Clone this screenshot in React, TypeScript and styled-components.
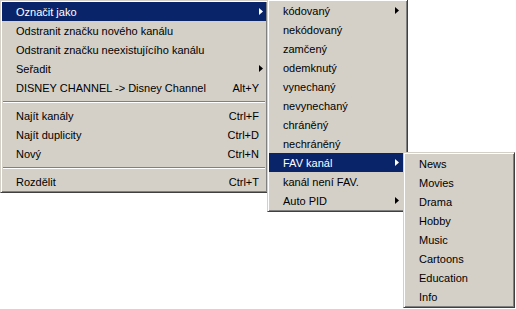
import React from "react";
import styled, { createGlobalStyle } from "styled-components";

const GlobalStyle = createGlobalStyle`
  html, body {
    margin: 0;
    padding: 0;
    background: #ffffff;
  }
  body {
    font-family: Tahoma, "Liberation Sans", Arial, sans-serif;
    font-size: 11px;
  }
`;

const Screen = styled.div`
  position: relative;
  width: 516px;
  height: 309px;
  overflow: hidden;
  background: #ffffff;
`;

const Menu = styled.div<{ $width: number; $left?: number; $top?: number }>`
  position: ${(p) => (p.$left === undefined ? "relative" : "absolute")};
  left: ${(p) => p.$left ?? 0}px;
  top: ${(p) => p.$top ?? 0}px;
  width: ${(p) => p.$width}px;
  box-sizing: border-box;
  padding: 1px;
  background: #d4d0c8;
  border: 1px solid;
  border-color: #d4d0c8 #404040 #404040 #d4d0c8;
  box-shadow: inset 1px 1px #ffffff, inset -1px -1px #808080;
  display: flex;
  flex-direction: column;
`;

const Item = styled.div<{ $active?: boolean }>`
  display: flex;
  align-items: center;
  height: 19px;
  padding-left: 14px;
  background: ${(p) => (p.$active ? "#0a246a" : "transparent")};
  color: ${(p) => (p.$active ? "#ffffff" : "#000000")};
  white-space: nowrap;
`;

const Label = styled.span`
  flex: 1;
`;

const Shortcut = styled.span`
  margin-right: 7px;
`;

const ArrowBox = styled.span<{ $gap: number }>`
  display: flex;
  margin-right: ${(p) => p.$gap}px;
`;

const Separator = styled.div`
  height: 9px;
  display: flex;
  flex-direction: column;
  justify-content: center;
  padding: 0 1px;

  &::before {
    content: "";
    display: block;
    border-top: 1px solid #808080;
    border-bottom: 1px solid #ffffff;
  }
`;

type Entry =
  | { label: string; shortcut?: string; sub?: boolean; active?: boolean }
  | "sep";

const Arrow: React.FC<{ active?: boolean; gap: number }> = ({ active, gap }) => (
  <ArrowBox $gap={gap}>
    <svg width="4" height="7" viewBox="0 0 4 7">
      <path d="M0 0 L4 3.5 L0 7 Z" fill={active ? "#ffffff" : "#000000"} />
    </svg>
  </ArrowBox>
);

const MenuList: React.FC<{ items: Entry[]; arrowGap: number }> = ({
  items,
  arrowGap,
}) => (
  <>
    {items.map((it, i) =>
      it === "sep" ? (
        <Separator key={i} />
      ) : (
        <Item key={i} $active={it.active}>
          <Label>{it.label}</Label>
          {it.shortcut && <Shortcut>{it.shortcut}</Shortcut>}
          {it.sub && <Arrow active={it.active} gap={arrowGap} />}
        </Item>
      )
    )}
  </>
);

const mainItems: Entry[] = [
  { label: "Označit jako", sub: true, active: true },
  { label: "Odstranit značku nového kanálu" },
  { label: "Odstranit značku neexistujícího kanálu" },
  { label: "Seřadit", sub: true },
  { label: "DISNEY CHANNEL -> Disney Channel", shortcut: "Alt+Y" },
  "sep",
  { label: "Najít kanály", shortcut: "Ctrl+F" },
  { label: "Najít duplicity", shortcut: "Ctrl+D" },
  { label: "Nový", shortcut: "Ctrl+N" },
  "sep",
  { label: "Rozdělit", shortcut: "Ctrl+T" },
];

const markItems: Entry[] = [
  { label: "kódovaný", sub: true },
  { label: "nekódovaný" },
  { label: "zamčený" },
  { label: "odemknutý" },
  { label: "vynechaný" },
  { label: "nevynechaný" },
  { label: "chráněný" },
  { label: "nechráněný" },
  { label: "FAV kanál", sub: true, active: true },
  { label: "kanál není FAV." },
  { label: "Auto PID", sub: true },
];

const favItems: Entry[] = [
  { label: "News" },
  { label: "Movies" },
  { label: "Drama" },
  { label: "Hobby" },
  { label: "Music" },
  { label: "Cartoons" },
  { label: "Education" },
  { label: "Info" },
];

export default function App() {
  return (
    <Screen>
      <GlobalStyle />
      <Menu $width={268}>
        <MenuList items={mainItems} arrowGap={3} />
      </Menu>
      <Menu $width={141} $left={267} $top={-1}>
        <MenuList items={markItems} arrowGap={7} />
      </Menu>
      <Menu $width={112} $left={403} $top={152}>
        <MenuList items={favItems} arrowGap={7} />
      </Menu>
    </Screen>
  );
}
